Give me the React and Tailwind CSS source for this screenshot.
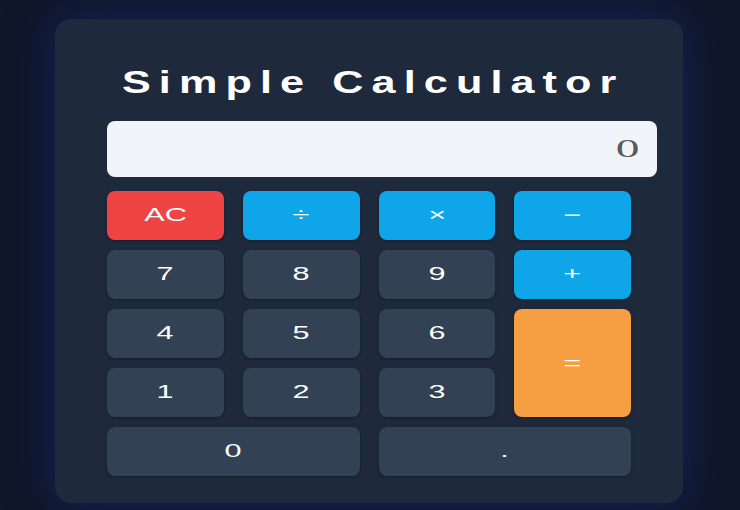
import React, { useState } from 'react';

const keys = [
    { label: 'AC', kind: 'clear' },
    { label: '÷', kind: 'op' },
    { label: '×', kind: 'op' },
    { label: '−', kind: 'op' },
    { label: '7' },
    { label: '8' },
    { label: '9' },
    { label: '+', kind: 'op' },
    { label: '4' },
    { label: '5' },
    { label: '6' },
    { label: '=', kind: 'equals' },
    { label: '1' },
    { label: '2' },
    { label: '3' },
    { label: '0', kind: 'wide' },
    { label: '.', kind: 'wide' },
];

const styleFor = (kind) => {
    switch (kind) {
        case 'clear':
            return 'bg-[#ef4444]';
        case 'op':
            return 'bg-[#0ea5e9]';
        case 'equals':
            return 'bg-[#f59f42] row-span-2';
        case 'wide':
            return 'bg-[#334155] col-span-2';
        default:
            return 'bg-[#334155]';
    }
};

const App = () => {
    const [display, setDisplay] = useState('0');

    const press = (label) => {
        if (label === 'AC') setDisplay('0');
        else if (label === '=') {
            try {
                const expr = display.replace(/÷/g, '/').replace(/×/g, '*').replace(/−/g, '-');
                // eslint-disable-next-line no-new-func
                setDisplay(String(Function(`return (${expr})`)()));
            } catch (e) {
                setDisplay('Error');
            }
        } else setDisplay(display === '0' ? label : display + label);
    };

    return (
        <div className="min-h-screen bg-[#0f172a] flex justify-center pt-[19px]">
            <div className="w-[628px] h-[484px] mr-[2px] rounded-2xl bg-[#1e293b] shadow-[0_0_45px_rgba(30,42,130,0.55)] pt-[43px] pb-[27px]">
                {/* Title */}
                <h1 className="h-[40px] leading-[40px] text-center text-white font-bold text-[32px] font-['Liberation_Sans',Arial,sans-serif]">
                    <span className="inline-block scale-x-[1.35] tracking-[6px] pl-[6px]">Simple Calculator</span>
                </h1>

                <div className="pl-[52px] pr-[26px] mt-[19px]">
                    {/* Display */}
                    <div className="h-[56px] rounded-lg bg-[#f1f5f9] flex items-center justify-end pr-[18px] overflow-hidden">
                        <span className="inline-block origin-right scale-x-[1.9] text-[25px] text-[#5a5a5a] font-['Liberation_Serif','Times_New_Roman',serif]">
                            {display}
                        </span>
                    </div>

                    {/* Keys */}
                    <div className="mt-[14px] w-[524px] grid grid-cols-4 auto-rows-[49px] gap-x-[19px] gap-y-[10px]">
                        {keys.map((k) => (
                            <button
                                key={k.label}
                                onClick={() => press(k.label)}
                                className={`${styleFor(k.kind)} rounded-lg shadow-[0_1px_3px_rgba(0,0,0,0.35)] flex items-center justify-center text-white text-[18px] font-['Liberation_Sans',Arial,sans-serif]`}
                            >
                                <span className="inline-block scale-x-[1.7]">{k.label}</span>
                            </button>
                        ))}
                    </div>
                </div>
            </div>
        </div>
    );
};

export default App;
